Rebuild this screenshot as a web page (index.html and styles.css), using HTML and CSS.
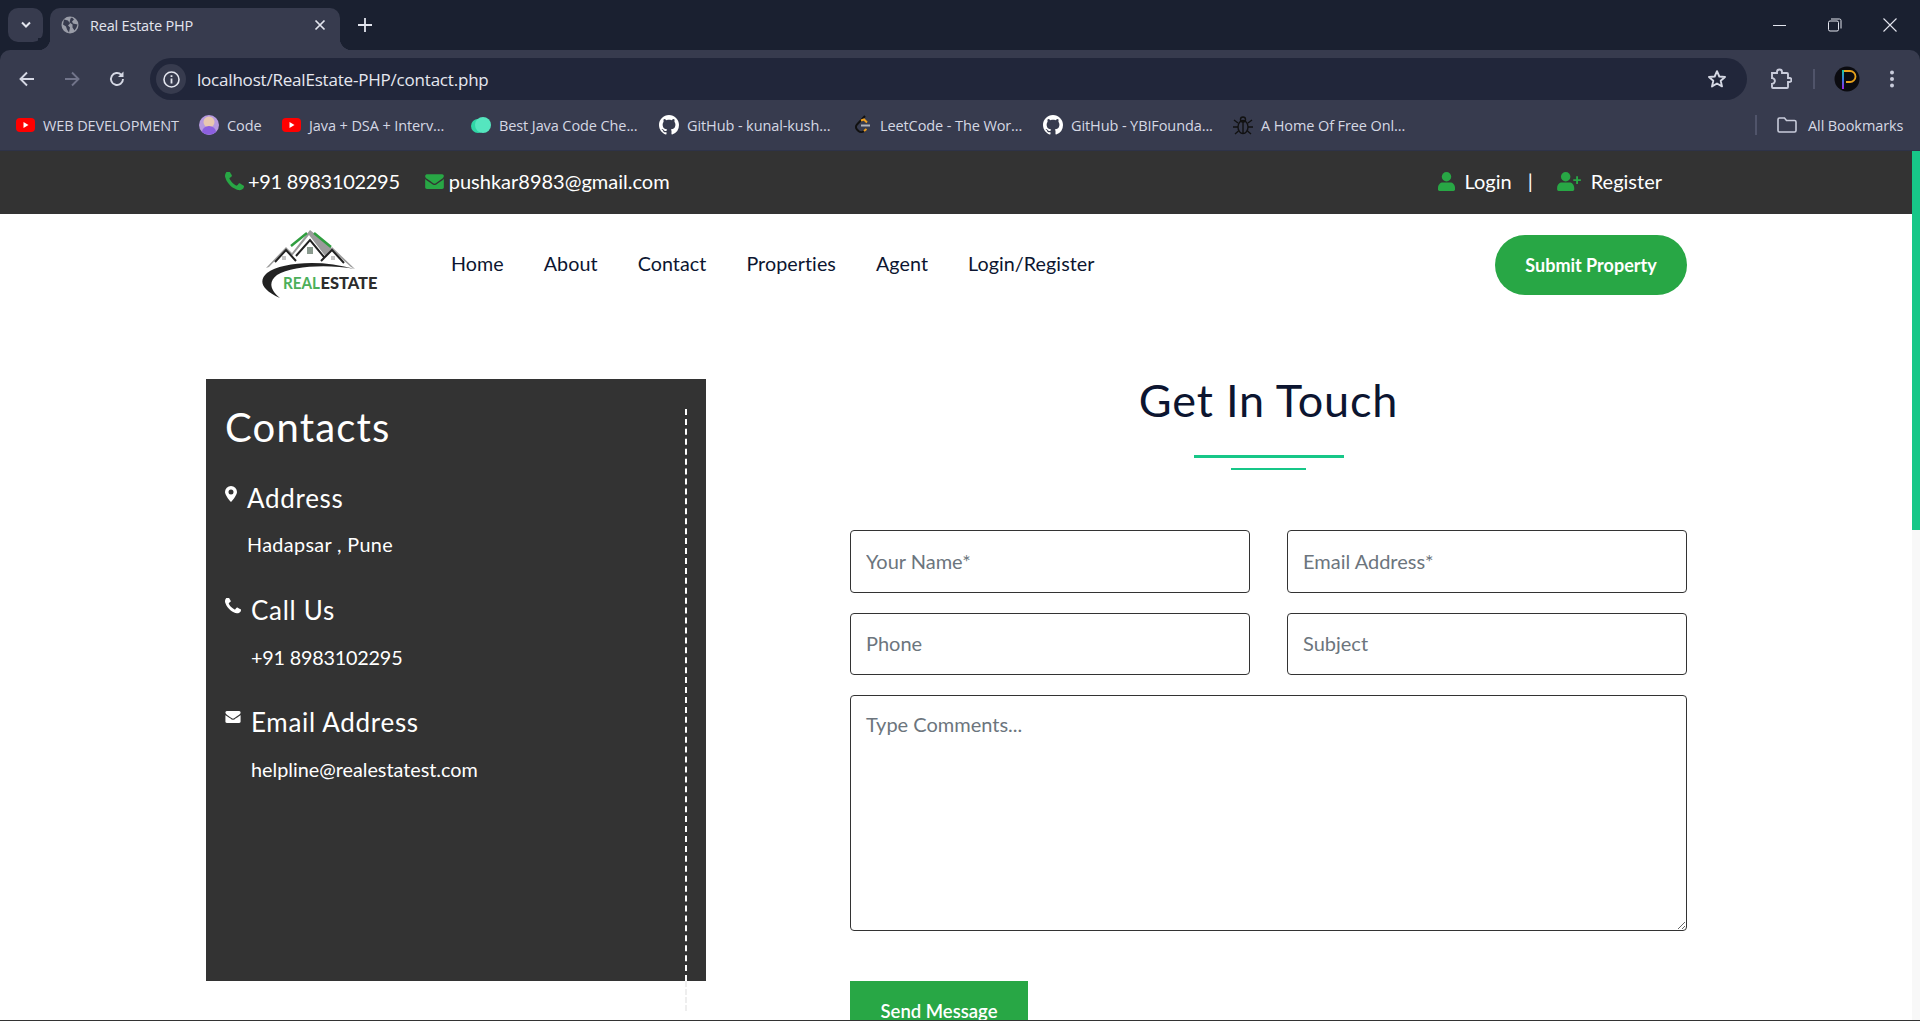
FILE: index.html
```html
<!DOCTYPE html>
<html lang="en">
<head>
    <meta charset="UTF-8">
    <title>Real Estate PHP</title>
    <link rel="stylesheet" href="styles.css">
</head>
<body>
    <div class="chrome">
        <div class="tabstrip">
            <div class="tab-search">
                <svg width="12" height="8" viewBox="0 0 12 8"><path d="M2 1.5l4 4 4-4" fill="none" stroke="#e3e5ee" stroke-width="2"/></svg>
            </div>
            <div class="tab">
                <svg class="fav" width="18" height="18" viewBox="0 0 18 18"><circle cx="9" cy="9" r="8.5" fill="#9a9da8"/><path d="M3 3.5l4 1 2 3-2 2 2 2-1 5-2-3-1-3-3-2zM11 1.5l2 2-2 2 1 2 4.500 1-1 3-2 3-2-3 0-3-3-2 1-4z" fill="#373b4e"/></svg>
                <span class="tab-title">Real Estate PHP</span>
                <svg class="tab-close" width="12" height="12" viewBox="0 0 12 12"><path d="M1.500 1.500l9 9M10.500 1.500l-9 9" stroke="#e3e5ee" stroke-width="1.700"/></svg>
            </div>
            <svg class="new-tab" width="14" height="14" viewBox="0 0 14 14"><path d="M7 0v14M0 7h14" stroke="#e3e5ee" stroke-width="1.800"/></svg>
            <div class="win-btns">
                <svg width="14" height="14" viewBox="0 0 14 14"><path d="M0 7.500h13" stroke="#e3e5ee" stroke-width="1"/></svg>
                <svg width="14" height="14" viewBox="0 0 14 14"><rect x="0.500" y="3" width="10" height="10" rx="1.500" fill="none" stroke="#e3e5ee"/><path d="M3 1h8.500a1.500 1.500 0 0 1 1.500 1.500v8" fill="none" stroke="#e3e5ee"/></svg>
                <svg width="14" height="14" viewBox="0 0 14 14"><path d="M0.500 0.500l13 13M13.500 0.500l-13 13" stroke="#e3e5ee" stroke-width="1.100"/></svg>
            </div>
        </div>
        <div class="toolbar">
            <div class="nav-btns">
                <svg width="16" height="16" viewBox="0 0 16 16"><path d="M15 8H2M8 1.500L1.500 8 8 14.500" fill="none" stroke="#d5d8e4" stroke-width="1.900"/></svg>
                <svg width="16" height="16" viewBox="0 0 16 16"><path d="M1 8h13M8 1.500L14.500 8 8 14.500" fill="none" stroke="#71748a" stroke-width="1.900"/></svg>
                <svg width="16" height="16" viewBox="0 0 16 16"><path d="M14 8a6 6 0 1 1-1.800-4.300" fill="none" stroke="#d5d8e4" stroke-width="1.900"/><path d="M14.500 0.500v5.500H9z" fill="#d5d8e4"/></svg>
            </div>
            <div class="omnibox">
                <div class="site-chip">
                    <svg width="17" height="17" viewBox="0 0 17 17"><circle cx="8.500" cy="8.500" r="7.500" fill="none" stroke="#e3e5ee" stroke-width="1.600"/><path d="M8.500 7.500v5M8.500 4.300v1.800" stroke="#e3e5ee" stroke-width="1.800"/></svg>
                </div>
                <span class="url">localhost/RealEstate-PHP/contact.php</span>
                <svg class="star" width="20" height="20" viewBox="0 0 20 20"><path d="M10 2.200l2.300 5.300 5.700.5-4.300 3.800 1.300 5.600L10 14.500l-5 2.900 1.300-5.600L2 8l5.700-.5z" fill="none" stroke="#d5d8e4" stroke-width="1.900" stroke-linejoin="round"/></svg>
            </div>
            <div class="tool-icons">
                <svg width="22" height="22" viewBox="0 0 22 22"><path d="M2 5h5V4a2.500 2.500 0 0 1 5 0v1h5a1 1 0 0 1 1 1v4h1.500a2 2 0 0 1 0 4H18v5a1 1 0 0 1-1 1H3a1 1 0 0 1-1-1v-3a3 3 0 0 0 1.500-5.500A3 3 0 0 0 2 10z" fill="none" stroke="#c9ccdb" stroke-width="1.900"/></svg>
                <span class="tool-sep"></span>
                <svg class="avatar" width="26" height="26" viewBox="0 0 26 26">
                    <defs><linearGradient id="rb" x1="0" y1="0" x2="0" y2="1"><stop offset="0" stop-color="#19c9a0"/><stop offset="0.500" stop-color="#3a7be0"/><stop offset="1" stop-color="#a01fe0"/></linearGradient></defs>
                    <circle cx="13" cy="13" r="12.500" fill="#0b0b10"/>
                    <path d="M10 5h6a5 5 0 0 1 0 11h-4" fill="none" stroke="#e8a21c" stroke-width="1.800"/>
                    <rect x="8" y="4" width="2" height="19" fill="url(#rb)"/>
                </svg>
                <svg width="4" height="18" viewBox="0 0 4 18"><circle cx="2" cy="2.500" r="2" fill="#c9ccdb"/><circle cx="2" cy="9" r="2" fill="#c9ccdb"/><circle cx="2" cy="15.500" r="2" fill="#c9ccdb"/></svg>
            </div>
        </div>
        <div class="bookmarks">
            <a class="bm bm-1"><svg width="19" height="14" viewBox="0 0 19 14"><rect width="19" height="14" rx="4" fill="#f00"/><path d="M7.500 4l5 3-5 3z" fill="#fff"/></svg><span>WEB DEVELOPMENT</span></a>
            <a class="bm bm-2"><svg width="20" height="20" viewBox="0 0 20 20"><circle cx="10" cy="10" r="10" fill="#b79ae0"/><circle cx="10" cy="7" r="5.500" fill="#e8c8b0"/><path d="M3 17a7 6 0 0 1 14 0 10 10 0 0 1-14 0z" fill="#8c60e0"/></svg><span>Code</span></a>
            <a class="bm bm-3"><svg width="19" height="14" viewBox="0 0 19 14"><rect width="19" height="14" rx="4" fill="#f00"/><path d="M7.500 4l5 3-5 3z" fill="#fff"/></svg><span>Java + DSA + Interv...</span></a>
            <a class="bm bm-4"><svg width="20" height="16" viewBox="0 0 20 16"><circle cx="7" cy="9" r="7" fill="#2fd6a6"/><circle cx="12" cy="8" r="8" fill="#55e6bf"/></svg><span>Best Java Code Che...</span></a>
            <a class="bm bm-5"><svg width="20" height="20" viewBox="0 0 16 16"><path fill="#fff" d="M8 0C3.580 0 0 3.580 0 8c0 3.540 2.290 6.530 5.470 7.590.4.070.55-.17.55-.38 0-.19-.01-.82-.01-1.490-2.010.37-2.530-.49-2.690-.94-.09-.23-.48-.94-.82-1.130-.28-.15-.68-.52-.01-.53.63-.01 1.080.58 1.230.82.72 1.210 1.870.87 2.330.66.07-.52.28-.87.51-1.070-1.780-.2-3.640-.89-3.640-3.950 0-.87.31-1.590.82-2.150-.08-.2-.36-1.020.08-2.120 0 0 .67-.21 2.200.82.64-.18 1.320-.27 2-.27.68 0 1.360.09 2 .27 1.530-1.040 2.200-.82 2.200-.82.44 1.100.16 1.920.08 2.120.51.56.82 1.270.82 2.150 0 3.070-1.870 3.750-3.650 3.950.29.25.54.73.54 1.480 0 1.070-.01 1.930-.01 2.200 0 .21.15.46.55.38A8.013 8.013 0 0016 8c0-4.420-3.580-8-8-8z"/></svg><span>GitHub - kunal-kush...</span></a>
            <a class="bm bm-6"><svg width="18" height="20" viewBox="0 0 18 20"><path d="M11 1L3 9.500a3.500 3.500 0 0 0 0 5l1.500 1.500a4 4 0 0 0 5.500 0" fill="none" stroke="#111" stroke-width="2"/><path d="M7 5.500l3-1 3 3M10 16l2.500-2" fill="none" stroke="#f0a020" stroke-width="2"/><path d="M7 10.500h9" stroke="#b0b2bb" stroke-width="2"/></svg><span>LeetCode - The Wor...</span></a>
            <a class="bm bm-7"><svg width="20" height="20" viewBox="0 0 16 16"><path fill="#fff" d="M8 0C3.580 0 0 3.580 0 8c0 3.540 2.290 6.530 5.470 7.590.4.070.55-.17.55-.38 0-.19-.01-.82-.01-1.490-2.010.37-2.530-.49-2.690-.94-.09-.23-.48-.94-.82-1.130-.28-.15-.68-.52-.01-.53.63-.01 1.080.58 1.230.82.72 1.210 1.870.87 2.330.66.07-.52.28-.87.51-1.070-1.780-.2-3.640-.89-3.640-3.950 0-.87.31-1.590.82-2.150-.08-.2-.36-1.020.08-2.120 0 0 .67-.21 2.200.82.64-.18 1.320-.27 2-.27.68 0 1.360.09 2 .27 1.530-1.040 2.200-.82 2.200-.82.44 1.100.16 1.920.08 2.120.51.56.82 1.270.82 2.150 0 3.070-1.870 3.750-3.650 3.950.29.25.54.73.54 1.480 0 1.070-.01 1.930-.01 2.200 0 .21.15.46.55.38A8.013 8.013 0 0016 8c0-4.420-3.580-8-8-8z"/></svg><span>GitHub - YBIFounda...</span></a>
            <a class="bm bm-8"><svg width="20" height="20" viewBox="0 0 20 20"><ellipse cx="10" cy="12" rx="5" ry="6.500" fill="none" stroke="#111" stroke-width="1.400"/><circle cx="10" cy="4.500" r="2.500" fill="none" stroke="#111" stroke-width="1.400"/><path d="M5 8L1 5M5 12H0M5.500 16L2 19M15 8l4-3M15 12h5M14.500 16l3.500 3M10 7v11" fill="none" stroke="#111" stroke-width="1.400"/></svg><span>A Home Of Free Onl...</span></a>
            <span class="bm-sep"></span>
            <a class="bm bm-all"><svg width="20" height="16" viewBox="0 0 20 16"><path d="M1 2.500A1.500 1.500 0 0 1 2.500 1h5l2 2.500h8A1.500 1.500 0 0 1 19 5v8.500a1.500 1.500 0 0 1-1.500 1.500h-15A1.500 1.500 0 0 1 1 13.500z" fill="none" stroke="#c9ccdb" stroke-width="1.600"/></svg><span>All Bookmarks</span></a>
        </div>
    </div>

    <div class="viewport">
        <div class="page">
            <div class="topbar">
                <div class="wrap topbar-inner">
                    <div class="top-left">
                        <span class="top-item top-phone">
                            <svg class="ico-phone" viewBox="192 192 1408 1408"><path d="M1600 1240q0 27-10 70.500t-21 68.500q-21 50-122 106-94 51-186 51-27 0-53-3.500t-57.500-12.500-47-14.500-55.500-20.500-49-18q-98-35-175-83-127-79-264-216t-216-264q-48-77-83-175-3-9-18-49t-20.500-55.500-14.500-47-12.500-57.500-3.500-53q0-92 51-186 56-101 106-122 25-11 68.500-21t70.500-10q14 0 21 3 18 6 53 76 11 19 30 54t35 63.500 31 53.500q3 4 17.500 25t21.500 35.500 7 28.500q0 20-28.500 50t-62 55-62 53-28.500 46q0 9 5 22.500t8.500 20.500 14 24 11.500 19q76 137 174 235t235 174q2 1 19 11.500t24 14 20.500 8.500 22.500 5q18 0 46-28.500t53-62 55-62 50-28.500q14 0 28.500 7t35.500 21.500 25 17.500q25 15 53.500 31t63.500 35 54 30q70 35 76 53 3 7 3 21z"/></svg>
                            +91 8983102295
                        </span>
                        <span class="top-item">
                            <svg class="ico-mail" viewBox="0 128 1792 1536"><path d="M1792 710v794q0 66-47 113t-113 47h-1472q-66 0-113-47t-47-113v-794q44 49 101 87 362 246 497 345 57 42 92.500 65.500t94.500 48 110 24.500h2q51 0 110-24.500t94.500-48 92.500-65.500q170-123 498-345 57-39 100-87zm0-294q0 79-49 151t-122 123q-376 261-468 325-10 7-42.500 30.500t-54 38-52 32.500-57.500 27-50 9h-2q-23 0-50-9t-57.500-27-52-32.500-54-38-42.500-30.500q-91-64-262-182.500t-205-142.500q-62-42-117-115.500t-55-136.500q0-78 41.500-130t118.500-52h1472q65 0 112.500 47t47.500 113z"/></svg>
                            pushkar8983@gmail.com
                        </span>
                    </div>
                    <div class="top-right">
                        <a class="top-link"><svg class="ico-user" viewBox="0 0 18 20"><circle cx="9" cy="5" r="5"/><path d="M0 17c0-4 2.500-6 5-6h8c2.500 0 5 2 5 6v1.500a1.500 1.500 0 0 1-1.500 1.500h-15A1.500 1.500 0 0 1 0 18.500z"/></svg>Login</a>
                        <span class="top-sep">|</span>
                        <a class="top-link"><svg class="ico-user-plus" viewBox="0 0 25 20"><circle cx="9" cy="5" r="5"/><path d="M0 17c0-4 2.500-6 5-6h8c2.500 0 5 2 5 6v1.500a1.500 1.500 0 0 1-1.500 1.500h-15A1.500 1.500 0 0 1 0 18.500zM20 4.500h2v3h3v2h-3v3h-2v-3h-3v-2h3z"/></svg>Register</a>
                    </div>
                </div>
            </div>

            <nav class="navbar">
                <div class="wrap navbar-inner">
                    <svg class="logo" width="118" height="70" viewBox="0 0 118 70">
                        <path d="M5 39L25 18l6 6L49 1l22 18 0-1 23 22-4-2-19-17-6 7-17-22-17 21-6-7-17 18z" fill="#9b9b9b"/>
                        <path d="M30 17L46 4M53 4l17 14" fill="none" stroke="#2f9e3f" stroke-width="2.500"/>
                        <path d="M14 33l11-12 10 11M35 27L49 11l14 17M60 32l11-11 12 13" fill="none" stroke="#222" stroke-width="2"/>
                        <rect x="46" y="18" width="6" height="7" fill="#8a9a8e"/><rect x="21" y="27" width="4" height="4" fill="#c5c5c5"/><rect x="70" y="27" width="4" height="4" fill="#c5c5c5"/>
                        <path d="M94 40C60 30 20 33 6 44c-8 7-7 16 13 25C8 60 8 52 16 46c14-9 50-11 78-6z" fill="#222"/>
                        <text class="logo-real" x="22" y="60" textLength="37" lengthAdjust="spacingAndGlyphs">REAL</text>
                        <text class="logo-estate" x="59.500" y="60" textLength="57" lengthAdjust="spacingAndGlyphs">ESTATE</text>
                    </svg>
                    <ul class="menu">
                        <li>Home</li>
                        <li>About</li>
                        <li>Contact</li>
                        <li>Properties</li>
                        <li>Agent</li>
                        <li>Login/Register</li>
                    </ul>
                    <a class="btn-submit">Submit Property</a>
                </div>
            </nav>

            <section class="wrap contact">
                <aside class="panel">
                    <h3 class="panel-title">Contacts</h3>
                    <div class="info">
                        <div class="info-head">
                            <svg class="ico-pin" viewBox="0 0 12 16"><path fill-rule="evenodd" d="M6 0a6 6 0 0 1 6 6c0 2.500-3.500 7.500-6 10C3.500 13.500 0 8.500 0 6a6 6 0 0 1 6-6zm0 3.500a2.500 2.500 0 1 0 0 5 2.500 2.500 0 0 0 0-5z"/></svg>
                            <h5>Address</h5>
                        </div>
                        <p class="p-addr">Hadapsar , Pune</p>
                    </div>
                    <div class="info info-wide">
                        <div class="info-head">
                            <svg class="ico-call" viewBox="192 192 1408 1408"><path d="M1600 1240q0 27-10 70.500t-21 68.500q-21 50-122 106-94 51-186 51-27 0-53-3.500t-57.500-12.500-47-14.500-55.500-20.500-49-18q-98-35-175-83-127-79-264-216t-216-264q-48-77-83-175-3-9-18-49t-20.500-55.500-14.500-47-12.500-57.500-3.500-53q0-92 51-186 56-101 106-122 25-11 68.500-21t70.500-10q14 0 21 3 18 6 53 76 11 19 30 54t35 63.500 31 53.500q3 4 17.500 25t21.500 35.500 7 28.500q0 20-28.500 50t-62 55-62 53-28.500 46q0 9 5 22.500t8.500 20.500 14 24 11.500 19q76 137 174 235t235 174q2 1 19 11.500t24 14 20.500 8.500 22.500 5q18 0 46-28.500t53-62 55-62 50-28.500q14 0 28.500 7t35.500 21.500 25 17.500q25 15 53.500 31t63.500 35 54 30q70 35 76 53 3 7 3 21z"/></svg>
                            <h5>Call Us</h5>
                        </div>
                        <p class="p-tel">+91 8983102295</p>
                    </div>
                    <div class="info info-wide">
                        <div class="info-head">
                            <svg class="ico-env" viewBox="0 128 1792 1536"><path d="M1792 710v794q0 66-47 113t-113 47h-1472q-66 0-113-47t-47-113v-794q44 49 101 87 362 246 497 345 57 42 92.500 65.500t94.500 48 110 24.500h2q51 0 110-24.500t94.500-48 92.500-65.500q170-123 498-345 57-39 100-87zm0-294q0 79-49 151t-122 123q-376 261-468 325-10 7-42.500 30.500t-54 38-52 32.500-57.500 27-50 9h-2q-23 0-50-9t-57.500-27-52-32.500-54-38-42.500-30.500q-91-64-262-182.500t-205-142.500q-62-42-117-115.500t-55-136.500q0-78 41.500-130t118.500-52h1472q65 0 112.500 47t47.500 113z"/></svg>
                            <h5>Email Address</h5>
                        </div>
                        <p>helpline@realestatest.com</p>
                    </div>
                    <span class="dashes"></span>
                </aside>

                <div class="form-side">
                    <div class="heading">
                        <h2>Get In Touch</h2>
                        <span class="rule-big"></span>
                        <span class="rule-small"></span>
                    </div>
                    <form class="form">
                        <input type="text" placeholder="Your Name*">
                        <input type="text" placeholder="Email Address*">
                        <input class="short" type="text" placeholder="Phone">
                        <input class="short" type="text" placeholder="Subject">
                        <textarea placeholder="Type Comments..."></textarea>
                        <button type="button">Send Message</button>
                    </form>
                </div>
            </section>
        </div>
        <div class="scrollbar"><div class="thumb"></div></div>
    </div>
</body>
</html>
```

FILE: styles.css
```css
* {
    box-sizing: border-box;
}
html, body {
    margin: 0;
    height: 100%;
    overflow: hidden;
}
body {
    display: flex;
    flex-direction: column;
    font-family: Lato, sans-serif;
    background-color: #fff;
}

/* browser frame */
.chrome {
    background-color: #1a2030;
    font-family: "Open Sans", sans-serif;
    flex: none;
}
.tabstrip {
    height: 50px;
    display: flex;
    align-items: flex-end;
    position: relative;
}
.tab-search {
    width: 35px;
    height: 34px;
    margin: 0 7px 8px 8px;
    border-radius: 10px;
    background-color: #373b4e;
    display: flex;
    align-items: center;
    justify-content: center;
}
.tab {
    width: 290px;
    height: 42px;
    background-color: #373b4e;
    border-radius: 10px 10px 0 0;
    display: flex;
    align-items: center;
    padding: 0 14px 8px 11px;
    position: relative;
}
.tab::before, .tab::after {
    content: "";
    position: absolute;
    bottom: 0;
    width: 12px;
    height: 12px;
}
.tab::before {
    left: -12px;
    background: radial-gradient(circle at 0 0, #1a2030 12px, #373b4e 12.500px);
}
.tab::after {
    right: -12px;
    background: radial-gradient(circle at 100% 0, #1a2030 12px, #373b4e 12.500px);
}
.tab-title {
    margin-left: 11px;
    flex: 1;
    font-size: 14.500px;
    color: #e3e5ee;
    letter-spacing: -0.2px;
}
.new-tab {
    margin: 0 0 18px 18px;
}
.win-btns {
    margin-left: auto;
    height: 50px;
    display: flex;
    align-items: center;
    gap: 41px;
    padding: 0 23px 0 0;
}
.toolbar {
    height: 50px;
    background-color: #373b4e;
    border-radius: 10px 10px 0 0;
    padding-top: 8px;
    display: flex;
    align-items: stretch;
}
.nav-btns {
    width: 150px;
    padding: 0 0 0 19px;
    display: flex;
    align-items: center;
    gap: 29px;
}
.omnibox {
    width: 1597px;
    background-color: #21263a;
    border-radius: 21px;
    display: flex;
    align-items: center;
    padding: 0 20px 0 6px;
}
.site-chip {
    width: 30px;
    height: 30px;
    border-radius: 50%;
    background-color: #373b4e;
    display: flex;
    align-items: center;
    justify-content: center;
}
.url {
    margin-left: 11px;
    flex: 1;
    font-size: 17px;
    letter-spacing: -0.2px;
    color: #e6e8f0;
}
.tool-icons {
    flex: 1;
    display: flex;
    align-items: center;
    padding-left: 23px;
}
.tool-sep {
    width: 2px;
    height: 20px;
    background-color: #50546a;
    margin: 0 19px 0 21px;
}
.tool-icons .avatar {
    margin-right: 30px;
}
.bookmarks {
    height: 51px;
    background-color: #373b4e;
    display: flex;
    align-items: center;
    padding-left: 16px;
    border-bottom: 1px solid #2e3348;
}
.bm {
    display: flex;
    align-items: center;
    gap: 8px;
    font-size: 14.500px;
    letter-spacing: -0.1px;
    color: #d5d8e4;
    white-space: nowrap;
    margin-right: 20px;
}
.bm span {
    display: block;
}
.bm-1 span { width: 136px; }
.bm-2 span { width: 35px; }
.bm-3 span { width: 142px; }
.bm-4 span { width: 140px; }
.bm-5 span { width: 147px; }
.bm-6 span { width: 143px; }
.bm-7 span { width: 142px; }
.bm-8 span { width: 145px; }
.bm-sep {
    width: 2px;
    height: 20px;
    background-color: #50546a;
    margin-left: 329px;
    margin-right: 20px;
}
.bm-all {
    margin-right: 0;
    gap: 11px;
}

/* page */
.viewport {
    flex: 1;
    min-height: 0;
    display: flex;
    border-bottom: 1px solid #333;
    overflow: hidden;
}
.page {
    flex: 1;
    min-width: 0;
}
.scrollbar {
    width: 8px;
    background-color: #f8f8f8;
}
.thumb {
    height: 379px;
    background-color: #17c788;
}
.wrap {
    width: 1481px;
    margin-left: 206px;
}
.topbar {
    height: 63px;
    background-color: #333;
    color: #fff;
    font-size: 20px;
}
.topbar-inner {
    height: 100%;
    display: flex;
    align-items: center;
    justify-content: space-between;
    padding: 0 25px 3px 19px;
}
.top-left, .top-right, .top-item, .top-link {
    display: flex;
    align-items: center;
}
.top-item {
    gap: 5px;
    margin-right: 25px;
}
.top-phone {
    gap: 4px;
    letter-spacing: -0.3px;
}
.top-item svg, .top-link svg {
    fill: #28a745;
}
.ico-phone {
    width: 19px;
    height: 19px;
}
.ico-mail {
    width: 19px;
    height: 16px;
}
.ico-user {
    width: 17px;
    height: 19px;
    margin-right: 10px;
}
.ico-user-plus {
    width: 24px;
    height: 19px;
    margin-right: 10px;
}
.top-sep {
    margin: 0 24px 0 16px;
}
.navbar {
    height: 102px;
    background-color: #fff;
}
.navbar-inner {
    height: 100%;
    display: flex;
    align-items: center;
    padding-left: 55px;
}
.logo {
    margin: -2px 0 0 0;
}
.logo-real {
    font: 700 17px Lato, sans-serif;
    fill: #4caf5a;
}
.logo-estate {
    font: 900 17px Lato, sans-serif;
    fill: #2c2c2c;
}
.menu {
    list-style: none;
    display: flex;
    gap: 40px;
    margin: -3px 0 0 72px;
    padding: 0;
    font-size: 19.700px;
    letter-spacing: 0.07px;
    color: #0c1530;
}
.btn-submit {
    margin-left: auto;
    width: 192px;
    height: 60px;
    border-radius: 30px;
    background-color: #28a745;
    color: #fff;
    font-size: 18px;
    font-weight: 700;
    display: flex;
    align-items: center;
    justify-content: center;
}
.contact {
    margin-top: 63px;
    display: flex;
    gap: 144px;
    align-items: flex-start;
}
.panel {
    width: 500px;
    height: 602px;
    flex: none;
    background-color: #333;
    color: #fff;
    padding: 24px 19px;
    position: relative;
}
.panel-title {
    margin: 0 0 26px;
    font-size: 40px;
    font-weight: 400;
    line-height: 48px;
    letter-spacing: 1.200px;
}
.info {
    margin-bottom: 31px;
}
.panel-title + .info {
    margin-bottom: 32px;
}
.info-head {
    display: flex;
    align-items: flex-start;
    gap: 10px;
    height: 34px;
}
.info-head svg {
    fill: #fff;
    flex: none;
    margin-top: 9px;
}
.info-head h5 {
    margin: 0;
    font-size: 26px;
    font-weight: 400;
    line-height: 34px;
    letter-spacing: 0.7px;
    position: relative;
    top: 4px;
}
.ico-pin {
    width: 12px;
    height: 16px;
}
.ico-call {
    width: 16px;
    height: 16px;
}
.ico-env {
    width: 16px;
    height: 13px;
}
.info p {
    margin: 21px 0 0 22px;
    font-size: 19.800px;
    line-height: 26px;
}
.info-wide p {
    margin-left: 26px;
}
.info .p-addr {
    letter-spacing: 0.35px;
    margin-top: 20px;
}
.info .p-tel {
    letter-spacing: -0.2px;
}
.dashes {
    position: absolute;
    left: 479px;
    top: 30px;
    height: 572px;
    border-left: 2px dashed #fff;
}
.dashes::after {
    content: "";
    position: absolute;
    left: -2px;
    top: 100%;
    height: 30px;
    border-left: 2px dashed #eee;
}
.form-side {
    width: 837px;
}
.heading {
    display: flex;
    flex-direction: column;
    align-items: center;
    height: 151px;
}
.heading h2 {
    margin: -2px 0 32px;
    font-size: 45px;
    font-weight: 400;
    line-height: 46px;
    color: #0c1530;
    letter-spacing: 0.8px;
}
.rule-big {
    width: 150px;
    height: 3px;
    background-color: #17c788;
    margin-bottom: 10px;
}
.rule-small {
    width: 75px;
    height: 2px;
    background-color: #17c788;
}
.form {
    display: grid;
    grid-template-columns: 400px 400px;
    justify-content: space-between;
    row-gap: 20px;
}
.form input, .form textarea {
    font-family: Lato, sans-serif;
    font-size: 20px;
    color: #333;
    border: 1px solid #333;
    border-radius: 4px;
    padding: 0 15px 2px;
    background-color: #fff;
    height: 63px;
}
.form input.short {
    height: 62px;
}
.form textarea {
    grid-column: 1 / 3;
    height: 236px;
    padding-top: 16px;
}
.form input::placeholder, .form textarea::placeholder {
    color: #6c757d;
    opacity: 1;
}
.form button {
    grid-column: 1;
    justify-self: start;
    width: 178px;
    height: 62px;
    margin-top: 30px;
    border: none;
    border-radius: 0;
    background-color: #28a745;
    color: #fff;
    font: 600 18.500px Lato, sans-serif;
    padding-bottom: 4px;
}
```
